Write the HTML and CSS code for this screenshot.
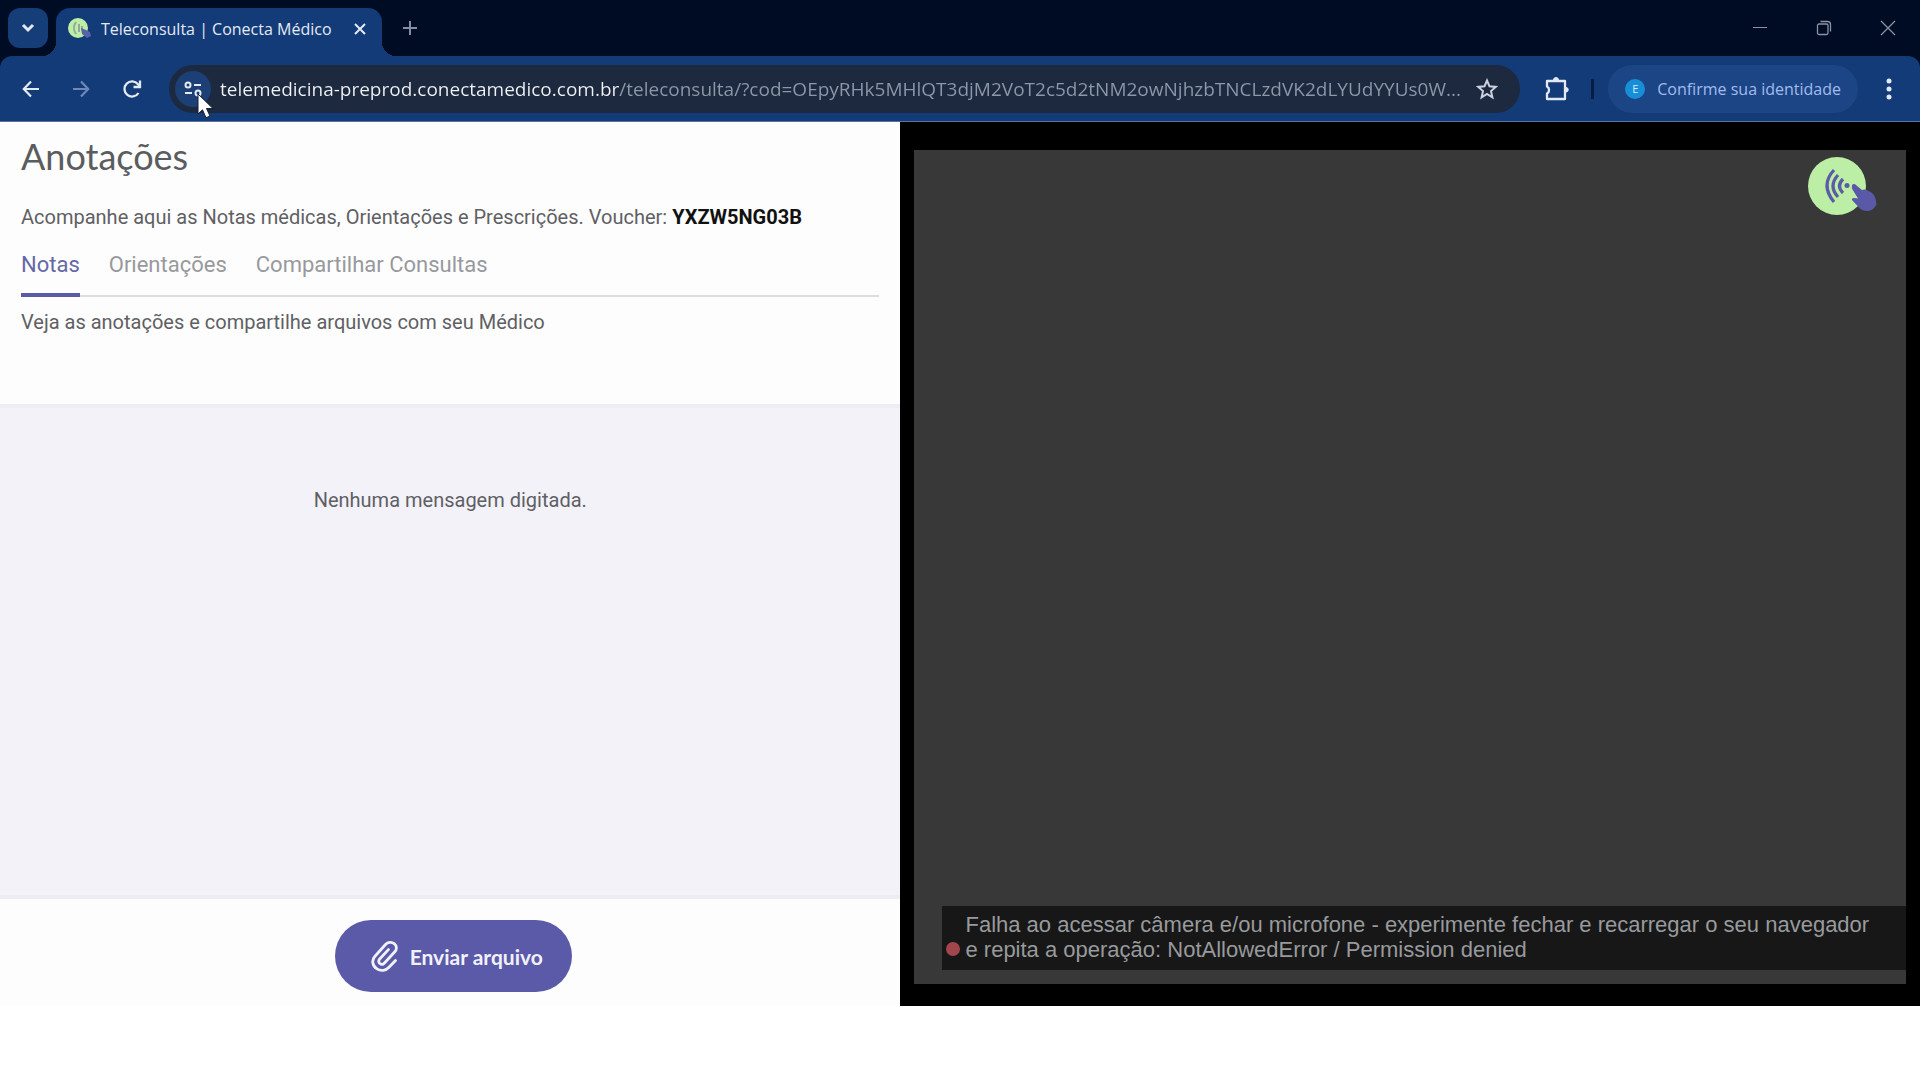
FILE: index.html
```html
<!DOCTYPE html>
<html lang="pt-BR">
<head>
<meta charset="utf-8">
<meta name="viewport" content="width=device-width, initial-scale=1">
<title>Teleconsulta | Conecta Médico</title>
<link rel="stylesheet" href="styles.css">
</head>
<body>
<header class="browser">
  <div class="tab-strip">
    <button class="tab-search" type="button" aria-label="Pesquisar guias">
      <svg width="16" height="16" viewBox="0 0 16 16" fill="none" stroke="currentColor" stroke-width="3"><path d="M3 5l5 5 5-5"/></svg>
    </button>
    <div class="tab">
      <svg class="favicon" width="24" height="22" viewBox="0 0 24 22"><circle cx="10" cy="10" r="10" fill="#bdeea5"/><path d="M8 4a10 10 0 0 0 0 12M11 6v8M14 8v4" fill="none" stroke="#91a99b" stroke-width="2"/><path d="M13 10l5 2 4 2 1 4-4 2-5-4z" fill="#5862a6"/></svg>
      <span class="tab-title">Teleconsulta | Conecta Médico</span>
      <button class="tab-close" type="button" aria-label="Fechar guia">
        <svg width="12" height="12" viewBox="0 0 12 12" stroke="currentColor" stroke-width="2"><path d="M1 1l10 10M11 1L1 11"/></svg>
      </button>
    </div>
    <button class="new-tab" type="button" aria-label="Nova guia">
      <svg width="14" height="14" viewBox="0 0 14 14" stroke="currentColor" stroke-width="2"><path d="M7 0v14M0 7h14"/></svg>
    </button>
    <div class="window-controls">
      <button type="button" aria-label="Minimizar"><svg width="16" height="16" viewBox="0 0 16 16" stroke="currentColor"><path d="M1 7.5h14"/></svg></button>
      <button type="button" aria-label="Restaurar"><svg width="16" height="16" viewBox="0 0 16 16" fill="none" stroke="currentColor" stroke-width="1.3"><rect x="1.5" y="4" width="10.500" height="10.500" rx="1.500"/><path d="M4.500 1.500h7a3 3 0 0 1 3 3v7"/></svg></button>
      <button type="button" aria-label="Fechar"><svg width="16" height="16" viewBox="0 0 16 16" stroke="currentColor" stroke-width="1.3"><path d="M1 1l14 14M15 1L1 15"/></svg></button>
    </div>
  </div>
  <div class="toolbar">
    <nav class="history" aria-label="Navegação">
      <button type="button" aria-label="Voltar"><svg width="18" height="18" viewBox="0 0 18 18" fill="none" stroke="currentColor" stroke-width="2.200"><path d="M17 9H2M9 1.500L1.800 9 9 16.500"/></svg></button>
      <button class="dim" type="button" aria-label="Avançar"><svg width="18" height="18" viewBox="0 0 18 18" fill="none" stroke="currentColor" stroke-width="2.200"><path d="M1 9h15M9 1.500L16.200 9 9 16.500"/></svg></button>
      <button type="button" aria-label="Recarregar"><svg width="20" height="20" viewBox="0 0 20 20" fill="none" stroke="currentColor" stroke-width="2.300"><path d="M16.500 14A7.600 7.600 0 1 1 16 5.200L18 7.500"/><path d="M18 1.500v6.500h-6.500"/></svg></button>
    </nav>
    <div class="address">
      <button class="site-info" type="button" aria-label="Ver informações do site">
        <svg width="18" height="16" viewBox="0 0 18 16" fill="none" stroke="currentColor" stroke-width="2"><circle cx="4" cy="4" r="2.500"/><path d="M10 4h7M1 12h7"/><circle cx="14" cy="12" r="2.500"/></svg>
        <svg class="pointer" width="18" height="26" viewBox="0 0 18 26"><path d="M1 1v20l4.500-4.200 3.500 8 4-1.800-3.500-7.500h6.500z" fill="#fff" stroke="#142038" stroke-width="1"/></svg>
      </button>
      <input class="url" type="text" aria-label="Barra de endereço" spellcheck="false" value="telemedicina-preprod.conectamedico.com.br/teleconsulta/?cod=OEpyRHk5MHlQT3djM2VoT2c5d2tNM2owNjhzbTNCLzdVK2dLYUdYYUs0W...">
      <button class="star" type="button" aria-label="Adicionar aos favoritos">
        <svg width="22" height="22" viewBox="0 0 22 22" fill="none" stroke="currentColor" stroke-width="2"><path d="M11 2.500l2.500 5.800 6.300.600-4.800 4.200 1.400 6.200-5.400-3.300-5.400 3.300L7 13.100 2.200 8.900l6.300-.600z"/></svg>
      </button>
    </div>
    <button class="extensions" type="button" aria-label="Extensões">
      <svg width="24" height="24" viewBox="0 0 24 24" fill="none" stroke="currentColor" stroke-width="2.300" stroke-linejoin="round"><path d="M2 4h18v18H2v-5.500a4 4 0 0 0 0-7z"/><path d="M8.500 3a2.500 2.500 0 0 1 5 0zM21 10.500a2 2 0 0 1 0 4.500z" fill="currentColor" stroke-width="1"/></svg>
    </button>
    <span class="divider"></span>
    <button class="profile" type="button"><span class="avatar">E</span><span>Confirme sua identidade</span></button>
    <button class="more" type="button" aria-label="Mais opções">
      <svg width="6" height="22" viewBox="0 0 6 22" fill="currentColor"><circle cx="3" cy="3" r="2.500"/><circle cx="3" cy="11" r="2.500"/><circle cx="3" cy="19" r="2.500"/></svg>
    </button>
  </div>
</header>
<main class="page">
  <section class="notes">
    <div class="notes-head">
      <h1>Anotações</h1>
      <p>Acompanhe aqui as Notas médicas, Orientações e Prescrições. Voucher: <strong>YXZW5NG03B</strong></p>
      <nav class="tabs" aria-label="Seções">
        <a class="active" href="#notas">Notas</a>
        <a href="#orientacoes">Orientações</a>
        <a href="#compartilhar">Compartilhar Consultas</a>
      </nav>
      <p>Veja as anotações e compartilhe arquivos com seu Médico</p>
    </div>
    <div class="messages"><p>Nenhuma mensagem digitada.</p></div>
    <footer class="notes-foot">
      <button class="send" type="button">
        <svg width="28" height="32" viewBox="0 0 28 32" fill="none" stroke="currentColor" stroke-width="2.800" stroke-linecap="round"><path d="M25.500 20.500l-6.500 6.800c-3 3.200-8 4.200-12 1.600-5-3.300-5.500-8.900-2-12.700L15.500 4.500c2.200-2.300 6-3 8.700-.900 2.800 2.200 2.800 5.800.600 8.200L14.500 23c-1.300 1.400-3.300 1.600-4.700.500s-1.400-3.100-.100-4.500l8.700-9.400"/></svg>
        <span>Enviar arquivo</span>
      </button>
    </footer>
  </section>
  <section class="call" aria-label="Chamada de vídeo">
    <div class="video">
      <svg class="brand" width="70" height="60" viewBox="0 0 70 60"><circle cx="29" cy="30" r="29" fill="#bdeea5"/><g fill="none" stroke="#5b5ca5" stroke-width="3.200"><path d="M26 14q-14 15 0 32"/><path d="M30 19q-10 11 0 22"/><path d="M35 23q-7 7 0 14"/></g><circle cx="39" cy="29.500" r="2.500" fill="#5b5ca5"/><path d="M44 29q2-2 4.500.500l5.500 4.500q3-1 5.500.500l4 2q3 2 4 6l1 6q-3 6-9 6.500-6 0-9-4l-6.500-7q-.500-2 2-2l4 .500-5.500-9q-1-2-.500-4z" fill="#5a59a8"/></svg>
      <p class="alert" role="alert"><span class="dot"></span><span>Falha ao acessar câmera e/ou microfone - experimente fechar e recarregar o seu navegador<br>e repita a operação: NotAllowedError / Permission denied</span></p>
    </div>
  </section>
</main>
</body>
</html>
```
FILE: styles.css
```css
* {
  box-sizing: border-box;
}

body {
  margin: 0;
  background: #fff;
  font-family: Roboto, sans-serif;
  font-size: 20px;
  color: #5f6064;
}

h1, p {
  margin: 0;
}

button {
  display: flex;
  align-items: center;
  justify-content: center;
  padding: 0;
  border: 0;
  background: none;
  color: inherit;
  font: inherit;
  cursor: pointer;
}

/* Browser frame */
.browser {
  background: #000c24;
  color: #e4e9f4;
  font-family: "Open Sans", "Noto Sans", sans-serif;
}

.tab-strip {
  display: flex;
  align-items: center;
  height: 56px;
  padding-left: 8px;
}

.tab-search {
  width: 40px;
  height: 40px;
  border-radius: 12px;
  background: #153d78;
}

.tab {
  position: relative;
  display: flex;
  align-items: center;
  align-self: flex-end;
  width: 326px;
  height: 48px;
  margin-left: 8px;
  padding: 0 10px 7px 12px;
  border-radius: 14px 14px 0 0;
  background: #123b78;
  font-size: 16px;
}

.tab::before,
.tab::after {
  content: "";
  position: absolute;
  bottom: 0;
  width: 14px;
  height: 14px;
}

.tab::before {
  right: 100%;
  background: radial-gradient(circle at 0 0, transparent 14px, #123b78 14px);
}

.tab::after {
  left: 100%;
  background: radial-gradient(circle at 100% 0, transparent 14px, #123b78 14px);
}

.tab-title {
  flex: 1;
  margin-left: 9px;
  white-space: nowrap;
}

.tab-close {
  width: 24px;
  height: 24px;
}

.new-tab {
  width: 40px;
  height: 40px;
  margin-left: 8px;
  color: #8290a3;
}

.window-controls {
  display: flex;
  align-self: stretch;
  margin-left: auto;
  color: #8b93a2;
}

.window-controls button {
  width: 64px;
}

.toolbar {
  display: flex;
  align-items: center;
  height: 66px;
  padding: 0 16px;
  border-bottom: 1px solid #5674a0;
  border-radius: 12px 12px 0 0;
  background: #123b78;
}

.history {
  display: flex;
}

.history button {
  width: 50px;
  height: 48px;
}

.history button:first-child {
  width: 30px;
}

.history button:nth-child(2) {
  margin: 0 1px 0 10px;
}

.history .dim {
  color: #7187b8;
}

.address {
  display: flex;
  align-items: center;
  flex: 1;
  height: 48px;
  margin: 0 17px 0 12px;
  padding: 0 15px 0 6px;
  border-radius: 24px;
  background: #1c293e;
}

.site-info {
  position: relative;
  width: 36px;
  height: 36px;
  border-radius: 50%;
  background: #1c3f76;
}

.pointer {
  position: absolute;
  top: 22px;
  left: 22px;
}

/* The host part of the address is brighter than its path. */
.url {
  flex: 1;
  min-width: 0;
  height: 40px;
  margin: 0 0 0 9px;
  padding: 0;
  border: 0;
  outline: 0;
  background: linear-gradient(90deg, #f1f3f7 399px, #8d98a9 399px);
  background-clip: text;
  -webkit-text-fill-color: transparent;
  color: #8d98a9;
  font: 19px "Open Sans", "Noto Sans", sans-serif;
}

.star {
  width: 36px;
  height: 36px;
  color: #cbd1de;
}

.extensions {
  width: 40px;
  height: 40px;
}

.divider {
  width: 3px;
  height: 20px;
  margin: 0 14px;
  background: #071c42;
}

.profile {
  gap: 12px;
  height: 48px;
  padding: 0 17px;
  border-radius: 24px;
  background: #1c4585;
  color: #a3bbee;
  font-size: 16px;
  white-space: nowrap;
}

.avatar {
  width: 20px;
  height: 20px;
  border-radius: 50%;
  background: #178fd8;
  color: #d9eafa;
  font-size: 11px;
  line-height: 20px;
}

.more {
  width: 30px;
  height: 40px;
  margin-left: 16px;
}

/* Consultation page */
.page {
  display: flex;
  min-height: 884px;
}

.notes {
  display: flex;
  flex-direction: column;
  width: 46.9%;
  background: #fdfdfd;
}

.notes-head {
  padding: 12px 21px 70px;
  line-height: 24px;
}

h1 {
  margin-bottom: 27px;
  color: #5b5c60;
  font: 36px/44px Lato, sans-serif;
}

strong {
  color: #111;
}

.tabs {
  display: flex;
  gap: 29px;
  margin: 16px 0 13px;
  border-bottom: 2px solid #dedee2;
  font-size: 22px;
}

.tabs a {
  margin-bottom: -2px;
  padding: 6px 0 14px;
  border-bottom: 4px solid transparent;
  color: #98999d;
  line-height: 28px;
  text-decoration: none;
}

.tabs .active {
  border-color: #5a5ba5;
  color: #6567a6;
}

.messages {
  flex: 1;
  padding: 80px 21px;
  border-top: 4px solid #eeedf3;
  border-bottom: 4px solid #eeedf3;
  background: #f3f2f9;
  text-align: center;
}

.notes-foot {
  display: flex;
  justify-content: center;
  padding: 21px 0 14px;
}

.send {
  gap: 12px;
  height: 72px;
  margin-left: 6px;
  padding: 0 29px 0 35px;
  border-radius: 36px;
  background: #5a5aa9;
  color: #f1f1fa;
  font: bold 21px Lato, sans-serif;
}

.call {
  display: flex;
  flex: 1;
  padding: 28px 14px 22px;
  background: #000;
}

.video {
  display: flex;
  flex: 1;
  flex-direction: column;
  justify-content: space-between;
  align-items: flex-end;
  padding: 6px 0 14px 28px;
  background: #383838;
}

.brand {
  margin-right: 28px;
}

.alert {
  display: flex;
  align-items: flex-end;
  align-self: stretch;
  gap: 5px;
  padding: 6px 4px 8px;
  background: #171717;
  color: #989a9d;
  font: 22px/25px "Liberation Sans", Arial, sans-serif;
}

.dot {
  flex: none;
  width: 14px;
  height: 14px;
  margin-bottom: 6px;
  border-radius: 50%;
  background: #a2454c;
}
```
